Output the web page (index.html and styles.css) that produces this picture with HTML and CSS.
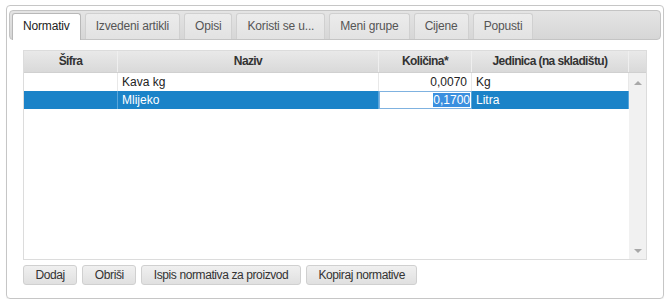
FILE: index.html
```html
<!DOCTYPE html>
<html>
<head>
<meta charset="utf-8">
<link rel="stylesheet" href="styles.css">
</head>
<body>
<div class="panel">
  <ul class="tabs">
    <li class="tab active">Normativ</li>
    <li class="tab">Izvedeni artikli</li>
    <li class="tab">Opisi</li>
    <li class="tab">Koristi se u...</li>
    <li class="tab">Meni grupe</li>
    <li class="tab">Cijene</li>
    <li class="tab">Popusti</li>
  </ul>
  <div class="content">
    <div class="grid">
      <div class="grid-head">
        <div class="hcell">Šifra</div>
        <div class="hcell">Naziv</div>
        <div class="hcell">Količina*</div>
        <div class="hcell">Jedinica (na skladištu)</div>
        <div class="hcell hlast"></div>
      </div>
      <div class="grid-body">
        <div class="rows">
          <div class="row">
            <div class="cell"></div>
            <div class="cell">Kava kg</div>
            <div class="cell num">0,0070</div>
            <div class="cell">Kg</div>
          </div>
          <div class="row selected">
            <div class="cell"></div>
            <div class="cell">Mlijeko</div>
            <div class="cell editor"><span class="sel">0,1700</span></div>
            <div class="cell">Litra</div>
          </div>
        </div>
        <div class="scrollbar">
          <span class="arrow up"></span>
          <span class="arrow down"></span>
        </div>
      </div>
    </div>
    <div class="buttons">
      <button class="btn">Dodaj</button>
      <button class="btn">Obriši</button>
      <button class="btn">Ispis normativa za proizvod</button>
      <button class="btn">Kopiraj normative</button>
    </div>
  </div>
</div>
</body>
</html>
```
FILE: styles.css
```css
html, body {
  margin: 0;
  padding: 0;
  background: #fff;
  font-family: "Liberation Sans", Arial, sans-serif;
  font-size: 12px;
  color: #333;
}
body {
  padding: 5px 0 0 6px;
}
.panel {
  box-sizing: border-box;
  width: 658px;
  height: 294px;
  border: 1px solid #c6c6c6;
  border-radius: 4px;
  padding: 4px 2px 0;
  box-shadow: 0 1px 1px rgba(0,0,0,0.06);
}
.tabs {
  list-style: none;
  margin: 0;
  padding: 2px 2px 0;
  height: 26px;
  display: flex;
  gap: 4px;
  border: 1px solid #c4c4c4;
  border-radius: 4px;
  background: linear-gradient(#e4e4e4, #d6d6d6);
}
.tab {
  box-sizing: border-box;
  height: 26px;
  padding: 0 10px;
  line-height: 24px;
  letter-spacing: -0.17px;
  border: 1px solid #d0d0d0;
  border-bottom: 0;
  border-radius: 3px 3px 0 0;
  background: linear-gradient(#ececec, #e2e2e2);
  color: #555;
  white-space: nowrap;
}
.tab.active {
  height: 27px;
  margin-bottom: -1px;
  background: #fff;
  border-color: #b8b8b8;
  color: #222;
}
.content {
  padding: 10px 14px 0;
}
.grid {
  box-sizing: border-box;
  width: 624px;
  height: 210px;
  border: 1px solid #dcdcdc;
  display: flex;
  flex-direction: column;
}
.grid-head {
  display: grid;
  grid-template-columns: 94px 261px 93px 157px 1fr;
  height: 21px;
  background: linear-gradient(#e9e9e9, #d9d9d9);
  border-bottom: 1px solid #d0d0d0;
}
.hcell {
  font-weight: bold;
  text-align: center;
  line-height: 21px;
  letter-spacing: -0.6px;
  color: #333;
  border-right: 1px solid #efefef;
  white-space: nowrap;
}
.hcell.hlast {
  border-right: 0;
}
.grid-body {
  flex: 1;
  display: flex;
}
.rows {
  flex: 1;
}
.row {
  display: grid;
  grid-template-columns: 94px 261px 93px 157px;
  height: 18px;
  color: #222;
}
.cell {
  box-sizing: border-box;
  line-height: 18px;
  padding: 0 4px;
  border-right: 1px solid #e8e8e8;
  white-space: nowrap;
  overflow: hidden;
}
.cell.num {
  text-align: right;
}
.row.selected {
  background: #1b83c8;
  color: #fff;
}
.row.selected .cell {
  border-right-color: #5aa6da;
}
.cell.editor {
  background: #fff;
  border: 1px solid #7fb2e0;
  padding: 0 1px 0 0;
  line-height: 16px;
  text-align: right;
}
.sel {
  background: #3a8fdf;
  color: #fff;
}
.scrollbar {
  width: 17px;
  background: #f1f1f1;
  position: relative;
}
.arrow {
  position: absolute;
  left: 5px;
  width: 0;
  height: 0;
  border-left: 4px solid transparent;
  border-right: 4px solid transparent;
}
.arrow.up {
  top: 8px;
  border-bottom: 4px solid #a8a8a8;
}
.arrow.down {
  bottom: 6px;
  border-top: 4px solid #a8a8a8;
}
.buttons {
  display: flex;
  gap: 5px;
  margin-top: 5px;
}
.btn {
  box-sizing: border-box;
  height: 20px;
  padding: 0 11.5px;
  font-family: "Liberation Sans", Arial, sans-serif;
  font-size: 12px;
  letter-spacing: -0.4px;
  color: #333;
  border: 1px solid #d0d0d0;
  border-radius: 3px;
  background: linear-gradient(#f0f0f0, #e0e0e0);
  line-height: 18px;
}
```
